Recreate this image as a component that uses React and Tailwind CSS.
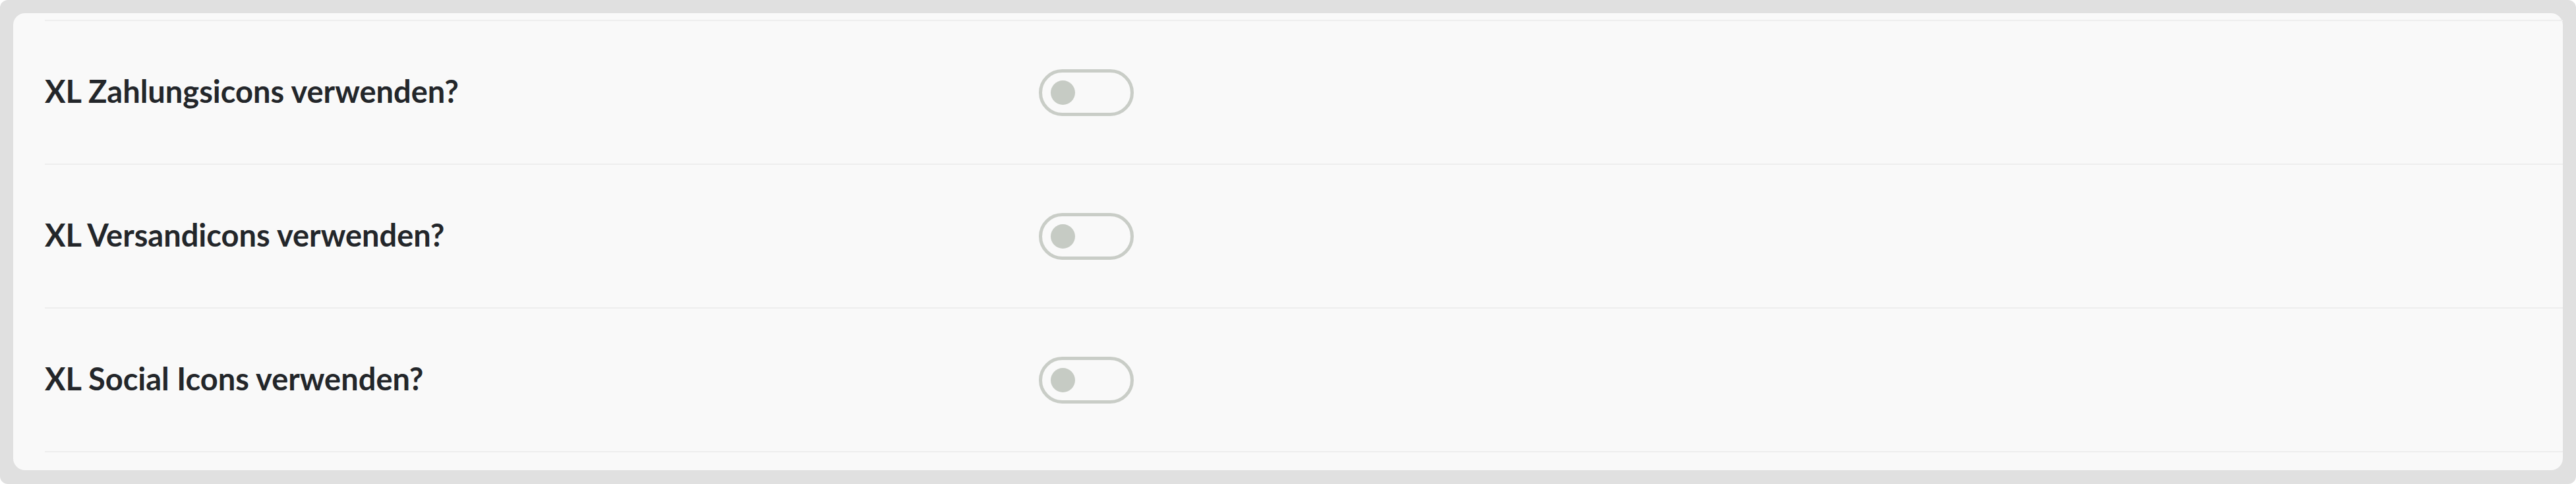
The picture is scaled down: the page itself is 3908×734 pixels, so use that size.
const settings = [
  { id: "payment", label: "XL Zahlungsicons verwenden?" },
  { id: "shipping", label: "XL Versandicons verwenden?" },
  { id: "social", label: "XL Social Icons verwenden?" },
];

const Toggle = () => (
  <div className="w-[144px] h-[71px] rounded-full border-[5px] border-[#c9cdc7] flex items-center pl-[13px] shrink-0">
    <div className="w-[37px] h-[37px] rounded-full bg-[#c6cbc4]" />
  </div>
);

export default function App() {
  return (
    <div className="w-[3908px] h-[734px] bg-white">
      <div className="h-full bg-[#e0e0e0] rounded-[12px] pt-[20px] pb-[21px] pl-[20px] pr-[20px]">
        <div className="h-full bg-[#f9f9f9] rounded-[18px] pt-[10px] pl-[48px]">
          <div className="border-t-2 border-[#eeeeee]">
            {settings.map((s) => (
              <div
                key={s.id}
                className="h-[218px] border-b-2 border-[#eeeeee] flex items-center"
              >
                <div
                  className="w-[1508px] text-[47px] font-bold text-[#23262a] leading-none -mt-[4px]"
                  style={{ fontFamily: "Lato, sans-serif" }}
                >
                  {s.label}
                </div>
                <Toggle />
              </div>
            ))}
          </div>
        </div>
      </div>
    </div>
  );
}
